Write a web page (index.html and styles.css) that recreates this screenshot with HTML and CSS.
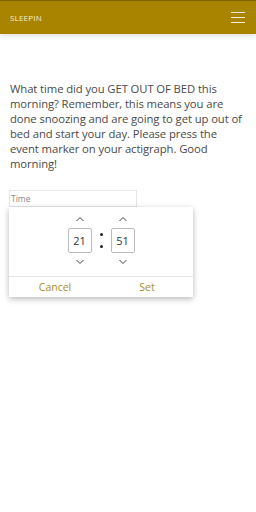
FILE: index.html
```html
<!DOCTYPE html>
<html>

<head lang="en">
    <meta charset="UTF-8">
    <title>SLEEPIN</title>
    <link rel="stylesheet" href="styles.css">
</head>

<body>
    <div class="topbar">
        <span class="brand">SLEEPIN</span>
        <span class="menu">
            <i></i>
            <i></i>
            <i></i>
        </span>
    </div>

    <div class="content">
        <p class="question">What time did you GET OUT OF BED this morning? Remember, this means you are done snoozing and are going to get up out of bed and start your day. Please press the event marker on your actigraph. Good morning!</p>

        <div class="field">
            <input class="time-input" type="text" placeholder="Time">
            <div class="picker">
                <div class="spinners">
                    <div class="spin">
                        <svg class="arrow" width="10" height="6" viewBox="0 0 10 6"><path d="M1.5 5 L5 1.5 L8.5 5" fill="none" stroke="#444" stroke-width="1"/></svg>
                        <div class="num">21</div>
                        <svg class="arrow" width="10" height="6" viewBox="0 0 10 6"><path d="M1.5 1 L5 4.5 L8.5 1" fill="none" stroke="#444" stroke-width="1"/></svg>
                    </div>
                    <div class="colon"><b></b><b></b></div>
                    <div class="spin">
                        <svg class="arrow" width="10" height="6" viewBox="0 0 10 6"><path d="M1.5 5 L5 1.5 L8.5 5" fill="none" stroke="#444" stroke-width="1"/></svg>
                        <div class="num">51</div>
                        <svg class="arrow" width="10" height="6" viewBox="0 0 10 6"><path d="M1.5 1 L5 4.5 L8.5 1" fill="none" stroke="#444" stroke-width="1"/></svg>
                    </div>
                </div>
                <div class="actions">
                    <span class="btn">Cancel</span>
                    <span class="btn">Set</span>
                </div>
            </div>
        </div>
    </div>
</body>

</html>
```

FILE: styles.css
```css
body {
    margin: 0;
    min-height: 512px;
    background: #fff;
    font-family: "Open Sans", "DejaVu Sans", sans-serif;
    color: #444;
}

.topbar {
    height: 34px;
    background: #a88400;
    border-top: 1px solid #7d6400;
    box-sizing: border-box;
    display: flex;
    align-items: center;
    justify-content: space-between;
    padding: 0 10px 0 10px;
    box-shadow: 0 2px 5px rgba(0, 0, 0, .12);
}

.brand {
    color: #f3ecd2;
    font-size: 8px;
    letter-spacing: .2px;
}

.menu {
    display: flex;
    flex-direction: column;
    gap: 4px;
    width: 14px;
    margin-right: 1px;
}

.menu i {
    display: block;
    height: 1px;
    background: #f3ecd2;
}

.content {
    padding: 0 9px;
}

.question {
    margin: 47px 0 19px 1px;
    font-size: 11.3px;
    line-height: 15px;
    letter-spacing: -.1px;
    color: #4a4a4a;
}

.time-input {
    display: block;
    box-sizing: border-box;
    width: 128px;
    height: 17px;
    border: 1px solid #e6e6e6;
    padding: 0 1px;
    font-family: inherit;
    font-size: 8.5px;
    color: #444;
    outline: none;
}

.time-input::placeholder {
    color: #8a8a8a;
}

.picker {
    width: 184px;
    background: #fff;
    box-shadow: 0 2px 6px rgba(0, 0, 0, .28);
}

.spinners {
    display: flex;
    justify-content: center;
    align-items: center;
    gap: 8px;
    padding: 9px 0 11px 0;
}

.spin {
    display: flex;
    flex-direction: column;
    align-items: center;
    gap: 6px;
}

.num {
    box-sizing: border-box;
    width: 24px;
    height: 25px;
    border: 1px solid #bbb;
    border-radius: 2px;
    display: flex;
    align-items: center;
    justify-content: center;
    font-size: 11px;
    color: #333;
}

.colon {
    display: flex;
    flex-direction: column;
    gap: 9px;
}

.colon b {
    display: block;
    width: 3px;
    height: 3px;
    border-radius: 50%;
    background: #222;
}

.actions {
    display: flex;
    border-top: 1px solid #e6e6e6;
    height: 20px;
    align-items: center;
}

.btn {
    flex: 1;
    text-align: center;
    color: #a88d1a;
    font-size: 10.5px;
}
```
